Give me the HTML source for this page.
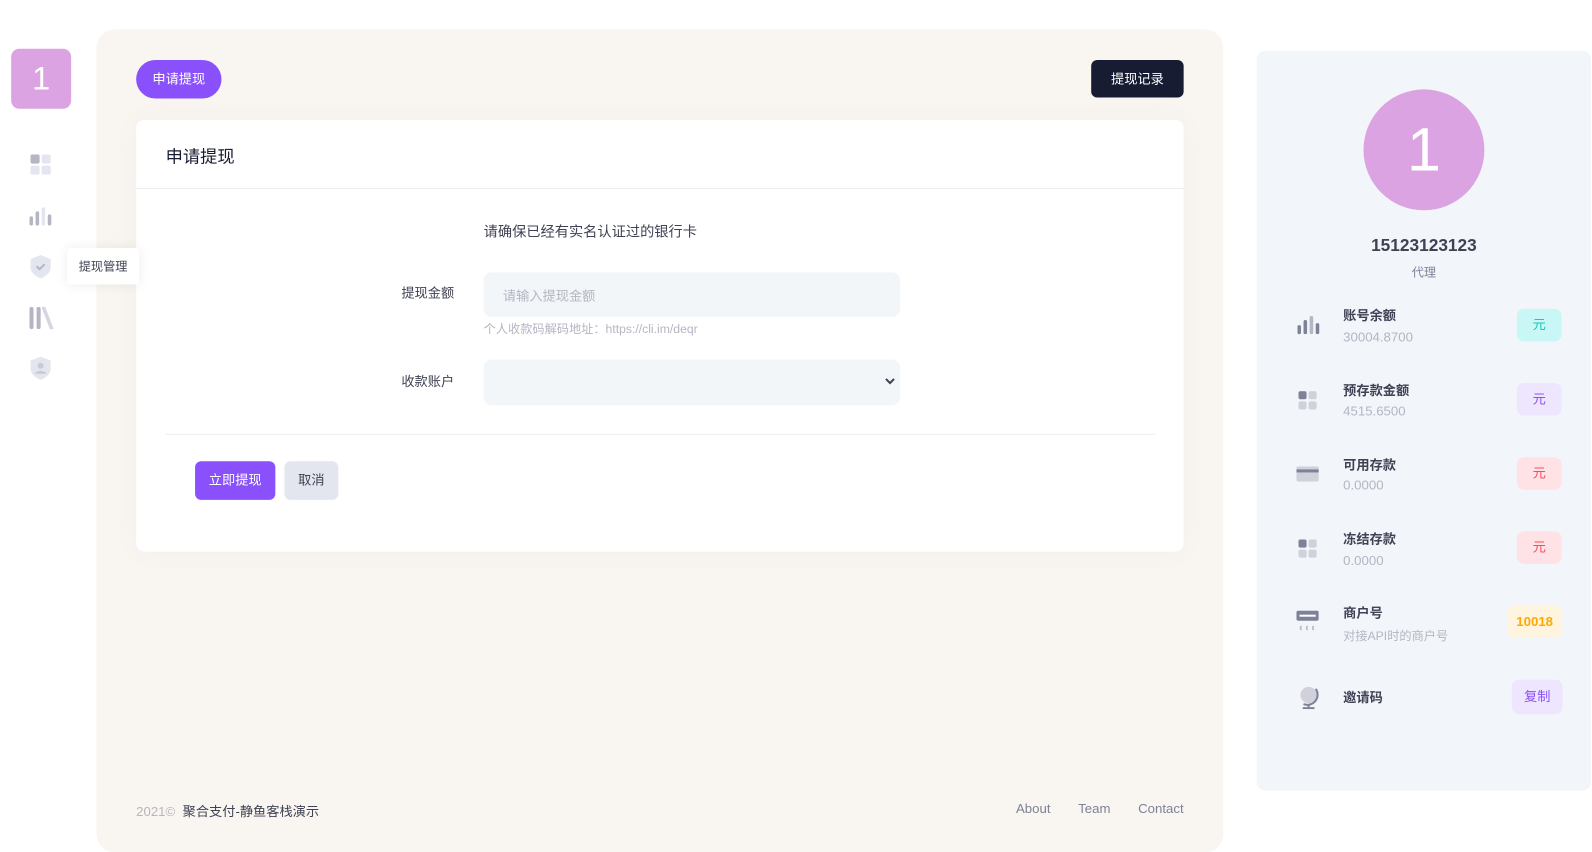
<!DOCTYPE html>
<html><head><meta charset="utf-8"><style>
*{box-sizing:border-box;margin:0;padding:0}
body{width:1592px;height:830px;background:#fff;font-family:"Liberation Sans","Noto Sans CJK SC",sans-serif;position:relative;overflow:hidden;color:#333}
#w{position:absolute;left:0;top:0;width:1567px;height:817px;transform:scale(1.016);transform-origin:0 0}
.abs{position:absolute}
.main{left:95px;top:29px;width:1109px;height:810px;background:#f9f5f0;border-radius:18px}
.logo{left:11px;top:48px;width:59px;height:59px;background:#dba3e2;border-radius:8px;color:#fff;font-size:32px;text-align:center;line-height:59px}
.btnp{left:134px;top:59px;width:84px;height:38px;background:#8950fc;border-radius:19px;color:#fff;font-size:13px;text-align:center;line-height:38px}
.btnd{left:1074px;top:59px;width:91px;height:37px;background:#181c32;border-radius:6px;color:#fff;font-size:13px;text-align:center;line-height:37px}
.card{left:134px;top:118px;width:1031px;height:425px;background:#fff;border-radius:8px;box-shadow:0 0 30px rgba(0,0,0,.03)}
.inp{background:#f3f6f9;border-radius:8px}
.right{left:1237px;top:50px;width:329px;height:728px;background:#f2f5f9;border-radius:8px}
.t{font-size:13px;color:#3f4254}
.badge{width:44px;height:32px;border-radius:7px;font-size:13px;text-align:center;line-height:32px}
</style></head><body><div id="w">
<div class="abs main"></div>
<div class="abs logo">1</div>
<svg class="abs" style="left:30px;top:152px" width="20" height="20"><rect x="0" y="0" width="9" height="9" rx="2" fill="#b5b5c3"/><rect x="11" y="0" width="9" height="9" rx="2" fill="#e4e6ef"/><rect x="0" y="11" width="9" height="9" rx="2" fill="#e4e6ef"/><rect x="11" y="11" width="9" height="9" rx="2" fill="#e4e6ef"/></svg>
<svg class="abs" style="left:29px;top:204px" width="22" height="18"><rect x="0" y="9" width="3.5" height="9" rx="1.7" fill="#b5b5c3"/><rect x="6" y="4" width="3.5" height="14" rx="1.7" fill="#b5b5c3"/><rect x="12" y="0" width="3.5" height="18" rx="1.7" fill="#e4e6ef"/><rect x="18" y="7" width="3.5" height="11" rx="1.7" fill="#b5b5c3"/></svg>
<svg class="abs" style="left:30px;top:251px" width="20" height="23"><path d="M10 0L20 4V12C20 17 15 21 10 23C5 21 0 17 0 12V4Z" fill="#e4e6ef"/><path d="M6 11l3 3 5-5" stroke="#b5b5c3" stroke-width="2" fill="none"/></svg>
<div class="abs" style="left:66px;top:244px;width:71px;height:36px;background:#fff;border-radius:4px;box-shadow:0 0 12px rgba(0,0,0,.08);font-size:12px;line-height:36px;text-align:center;color:#3f4254;z-index:5">提现管理</div>
<svg class="abs" style="left:29px;top:302px" width="24" height="22"><rect x="0" y="0" width="4" height="22" rx="2" fill="#b5b5c3"/><rect x="7" y="0" width="4" height="22" rx="2" fill="#b5b5c3"/><path d="M14 1l8 21" stroke="#d5d6de" stroke-width="3.5" stroke-linecap="round"/></svg>
<svg class="abs" style="left:30px;top:351px" width="20" height="23"><path d="M10 0L20 4V12C20 17 15 21 10 23C5 21 0 17 0 12V4Z" fill="#e4e6ef"/><circle cx="10" cy="9" r="3" fill="#c9cad4"/><path d="M4 17c2-4 10-4 12 0" fill="#c9cad4"/></svg>

<div class="abs btnp">申请提现</div>
<div class="abs btnd">提现记录</div>
<div class="abs card">
 <div class="abs" style="left:29px;top:22px;font-size:17px;color:#181c32">申请提现</div>
 <div class="abs" style="left:0;top:67px;width:1031px;height:1px;background:#ebedf3"></div>
 <div class="abs" style="left:342px;top:100px;font-size:14px;color:#3f4254">请确保已经有实名认证过的银行卡</div>
 <div class="abs t" style="left:261px;top:160px">提现金额</div>
 <div class="abs inp" style="left:342px;top:150px;width:410px;height:44px"><span style="position:absolute;left:19px;top:13px;font-size:13px;color:#b5b5c3">请输入提现金额</span></div>
 <div class="abs" style="left:342px;top:197px;font-size:12px;color:#b5b5c3">个人收款码解码地址：https://cli.im/deqr</div>
 <div class="abs t" style="left:261px;top:247px">收款账户</div>
 <div class="abs inp" style="left:342px;top:236px;width:410px;height:45px"><svg style="position:absolute;right:5px;top:18px" width="10" height="8"><path d="M1 1l4 4 4-4" stroke="#3f4254" stroke-width="2" fill="none"/></svg></div>
 <div class="abs" style="left:29px;top:309px;width:974px;height:1px;background:#ebedf3"></div>
 <div class="abs" style="left:58px;top:336px;width:79px;height:38px;background:#8950fc;border-radius:6px;color:#fff;font-size:13px;text-align:center;line-height:38px">立即提现</div>
 <div class="abs" style="left:146px;top:336px;width:53px;height:38px;background:#e4e6ef;border-radius:6px;color:#3f4254;font-size:13px;text-align:center;line-height:38px">取消</div>
</div>
<div class="abs" style="left:134px;top:788px;font-size:13px;color:#b5b5c3">2021©&nbsp;&nbsp;<span style="color:#3f4254">聚合支付-静鱼客栈演示</span></div>
<div class="abs" style="left:1000px;top:788px;width:165px;font-size:13px;color:#7e8299;display:flex;justify-content:space-between"><span>About</span><span>Team</span><span>Contact</span></div>

<div class="abs right"></div>
<div class="abs" style="left:1342px;top:88px;width:119px;height:119px;border-radius:50%;background:#dba3e2;color:#fff;font-size:60px;text-align:center;line-height:119px">1</div>
<div class="abs" style="left:1237px;top:232px;width:329px;text-align:center;font-size:17px;font-weight:bold;color:#3f4254">15123123123</div>
<div class="abs" style="left:1237px;top:259px;width:329px;text-align:center;font-size:12px;color:#7e8299">代理</div>

<svg class="abs" style="left:1277px;top:311px" width="22" height="18"><rect x="0" y="9" width="3.5" height="9" rx="1.7" fill="#7e8299"/><rect x="6" y="4" width="3.5" height="14" rx="1.7" fill="#7e8299"/><rect x="12" y="0" width="3.5" height="18" rx="1.7" fill="#b5b5c3"/><rect x="18" y="7" width="3.5" height="11" rx="1.7" fill="#7e8299"/></svg>
<div class="abs t" style="left:1322px;top:300px;font-weight:bold">账号余额</div>
<div class="abs" style="left:1322px;top:324px;font-size:13px;color:#b5b5c3">30004.8700</div>
<div class="abs badge" style="left:1493px;top:304px;background:#c9f7f5;color:#1bc5bd">元</div>

<svg class="abs" style="left:1278px;top:385px" width="18" height="18"><rect width="8" height="8" rx="2" fill="#7e8299"/><rect x="10" width="8" height="8" rx="2" fill="#d0d1da"/><rect y="10" width="8" height="8" rx="2" fill="#d0d1da"/><rect x="10" y="10" width="8" height="8" rx="2" fill="#d0d1da"/></svg>
<div class="abs t" style="left:1322px;top:374px;font-weight:bold">预存款金额</div>
<div class="abs" style="left:1322px;top:397px;font-size:13px;color:#b5b5c3">4515.6500</div>
<div class="abs badge" style="left:1493px;top:377px;background:#eee5ff;color:#8950fc">元</div>

<svg class="abs" style="left:1276px;top:459px" width="22" height="15"><rect width="22" height="15" rx="2" fill="#d0d1da"/><rect y="3" width="22" height="3" fill="#7e8299"/></svg>
<div class="abs t" style="left:1322px;top:447px;font-weight:bold">可用存款</div>
<div class="abs" style="left:1322px;top:470px;font-size:13px;color:#b5b5c3">0.0000</div>
<div class="abs badge" style="left:1493px;top:450px;background:#ffe2e5;color:#f64e60">元</div>

<svg class="abs" style="left:1278px;top:531px" width="18" height="18"><rect width="8" height="8" rx="2" fill="#7e8299"/><rect x="10" width="8" height="8" rx="2" fill="#d0d1da"/><rect y="10" width="8" height="8" rx="2" fill="#d0d1da"/><rect x="10" y="10" width="8" height="8" rx="2" fill="#d0d1da"/></svg>
<div class="abs t" style="left:1322px;top:520px;font-weight:bold">冻结存款</div>
<div class="abs" style="left:1322px;top:544px;font-size:13px;color:#b5b5c3">0.0000</div>
<div class="abs badge" style="left:1493px;top:523px;background:#ffe2e5;color:#f64e60">元</div>

<svg class="abs" style="left:1276px;top:601px" width="22" height="22"><rect width="22" height="10" rx="2" fill="#7e8299"/><rect x="3" y="4" width="16" height="2" fill="#fff"/><path d="M5 15q-2 2 0 4M11 15q-2 2 0 4M17 15q-2 2 0 4" stroke="#b5b5c3" stroke-width="1.5" fill="none"/></svg>
<div class="abs t" style="left:1322px;top:593px;font-weight:bold">商户号</div>
<div class="abs" style="left:1322px;top:617px;font-size:12px;color:#b5b5c3">对接API时的商户号</div>
<div class="abs badge" style="left:1484px;top:596px;width:53px;background:#fff4de;color:#ffa800;font-weight:bold">10018</div>

<svg class="abs" style="left:1277px;top:674px" width="22" height="24"><circle cx="11" cy="10" r="8" fill="#d0d1da"/><path d="M18 4a10 10 0 0 1-12 15" stroke="#7e8299" stroke-width="2" fill="none"/><rect x="10" y="19" width="2" height="3" fill="#7e8299"/><rect x="5" y="22" width="12" height="2" rx="1" fill="#7e8299"/></svg>
<div class="abs t" style="left:1322px;top:676px;font-weight:bold">邀请码</div>
<div class="abs badge" style="left:1488px;top:669px;width:50px;height:34px;line-height:34px;background:#eee5ff;color:#8950fc">复制</div>
</div></body></html>
